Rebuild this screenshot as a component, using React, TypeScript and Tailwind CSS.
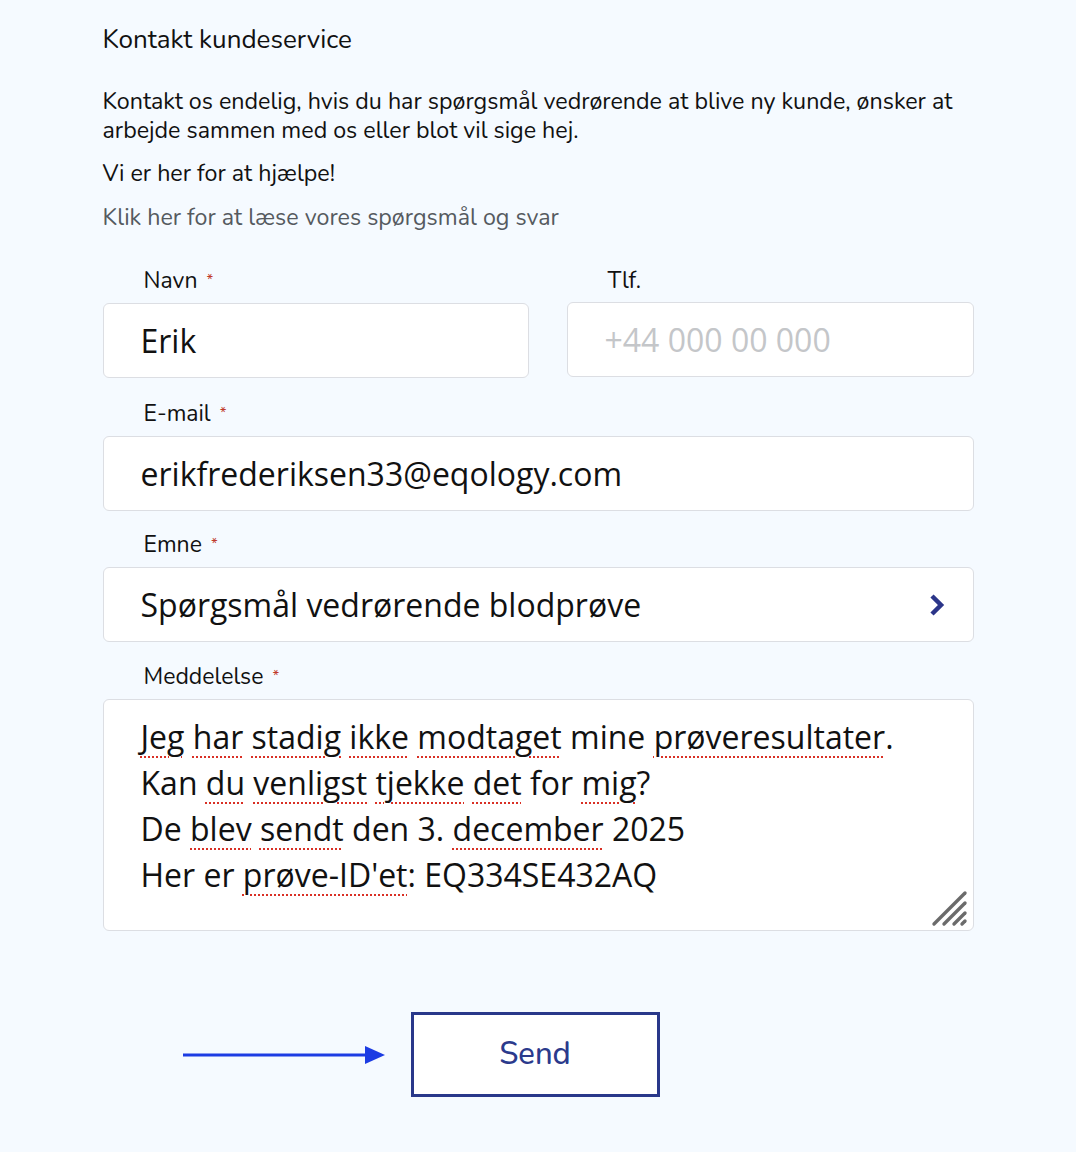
import React from 'react';

const sans = 'font-["Nunito","Noto_Sans",sans-serif]';
const input = 'font-["Open_Sans",sans-serif]';

/** Word with the browser's red dotted spell-check underline. */
function Typo({ children }: { children: React.ReactNode }) {
  return (
    <span className="underline decoration-dotted decoration-[#d93025] decoration-2 underline-offset-[7px]">
      {children}
    </span>
  );
}

function Label({ text, required = false }: { text: string; required?: boolean }) {
  return (
    <div className={`mb-[10px] flex h-[28px] items-center pl-[41px] text-[23px] text-[#111] ${sans}`}>
      <span className="relative top-[2px]">{text}</span>
      {required && (
        <span className="relative top-[1px] ml-[9px] text-[15px] text-[#c0392b]">*</span>
      )}
    </div>
  );
}

const box =
  'flex h-[75px] items-center rounded-[6px] border border-[#dcdee3] bg-white pl-[37px] text-[32px]';

export default function App() {
  return (
    <div className="min-h-[1152px] bg-[#f5faff]">
      <div className={`mx-auto w-[871px] pt-[24px] ${sans}`}>
        <h1 className="text-[26px] leading-[32px] text-[#111]">Kontakt kundeservice</h1>

        <p className="mt-[31px] text-[23.25px] leading-[29px] text-[#111]">
          Kontakt os endelig, hvis du har spørgsmål vedrørende at blive ny kunde, ønsker at
          <br />
          arbejde sammen med os eller blot vil sige hej.
        </p>
        <p className="mt-[14px] text-[23.25px] leading-[29px] text-[#111]">Vi er her for at hjælpe!</p>
        <p className="mt-[15px] text-[23.25px] leading-[29px] text-[#555a60]">
          Klik her for at læse vores spørgsmål og svar
        </p>

        <div className="mt-[33px] grid grid-cols-[426px_1fr] gap-x-[38px]">
          <div>
            <Label text="Navn" required />
            <div className={`${box} ${input} text-[#111]`}>Erik</div>
          </div>
          <div>
            <Label text="Tlf." />
            <div className={`${box} -mt-px ${input} text-[#c4c6c9]`}>+44 000 00 000</div>
          </div>
        </div>

        <div className="mt-[20px]">
          <Label text="E-mail" required />
          <div className={`${box} ${input} text-[#111]`}>erikfrederiksen33@eqology.com</div>
        </div>

        <div className="mt-[18px]">
          <Label text="Emne" required />
          <div className={`${box} justify-between pr-[28px] ${input} text-[#111]`}>
            <span>Spørgsmål vedrørende blodprøve</span>
            <svg width="16" height="24" viewBox="0 0 16 24" fill="none">
              <path d="M3 3 L12 12 L3 21" stroke="#2b3589" strokeWidth="4.5" strokeLinejoin="miter" />
            </svg>
          </div>
        </div>

        <div className="mt-[19px]">
          <Label text="Meddelelse" required />
          <div
            className={`relative h-[232px] rounded-[6px] border border-[#dcdee3] bg-white pl-[37px] pt-[14px] text-[32px] leading-[46px] text-[#111] ${input}`}
          >
            <div>
              <Typo>Jeg</Typo> <Typo>har</Typo> <Typo>stadig</Typo> <Typo>ikke</Typo>{' '}
              <Typo>modtaget</Typo> mine <Typo>prøveresultater</Typo>.
            </div>
            <div>
              Kan <Typo>du</Typo> <Typo>venligst</Typo> <Typo>tjekke</Typo> <Typo>det</Typo> for{' '}
              <Typo>mig</Typo>?
            </div>
            <div>
              De <Typo>blev</Typo> <Typo>sendt</Typo> den 3. <Typo>december</Typo> 2025
            </div>
            <div>
              Her er <Typo>prøve-ID'et</Typo>: EQ334SE432AQ
            </div>
            <svg
              className="absolute bottom-[2px] right-[3px]"
              width="40"
              height="40"
              viewBox="0 0 40 40"
              fill="none"
            >
              <g stroke="#6b6b6b" strokeWidth="3.4" strokeLinecap="round">
                <path d="M4 36 L35 5" />
                <path d="M14 36 L35 15" />
                <path d="M24 36 L35 25" />
                <path d="M32 36 L35 33" />
              </g>
            </svg>
          </div>
        </div>

        <div className="mt-[81px] flex items-center gap-[26px] pl-[80px]">
          <svg width="202" height="20" viewBox="0 0 202 20" fill="none">
            <path d="M0 10 H184" stroke="#1c3ce3" strokeWidth="3" />
            <path d="M182 1 L202 10 L182 19 Z" fill="#1c3ce3" />
          </svg>
          <button className="flex h-[85px] w-[249px] items-center justify-center border-[3px] border-[#29388a] bg-white text-[31px] font-medium text-[#2b3a8c]">
            Send
          </button>
        </div>
      </div>
    </div>
  );
}
